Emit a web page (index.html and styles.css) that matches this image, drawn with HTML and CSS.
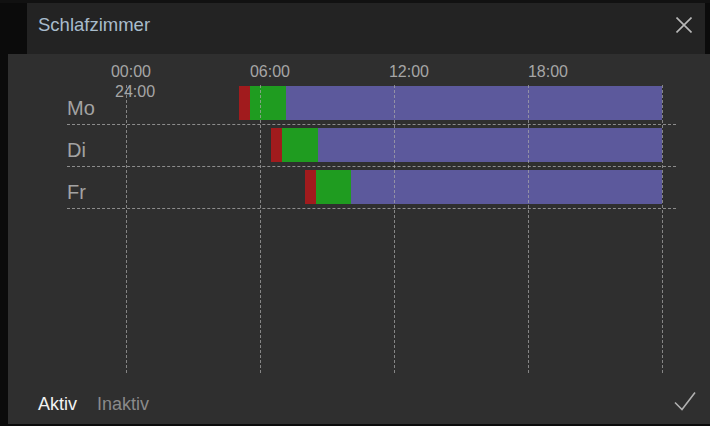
FILE: index.html
```html
<!DOCTYPE html>
<html lang="de">
<head>
<meta charset="utf-8">
<title>Schlafzimmer</title>
<link rel="stylesheet" href="styles.css">
</head>
<body>
<div class="page">
  <div class="topstrip"></div>
  <header class="head">
    <span class="title">Schlafzimmer</span>
    <svg class="close" width="16" height="16" viewBox="0 0 16 16"><path d="M0.5 0.5 L15.5 15.5 M15.5 0.5 L0.5 15.5" stroke="#b8b8b8" stroke-width="1.6" fill="none"/></svg>
  </header>
  <section class="panel">
    <div class="axis">
      <span class="tick">00:00</span>
      <span class="tick">06:00</span>
      <span class="tick">12:00</span>
      <span class="tick">18:00</span>
    </div>
    <div class="plot">
      <div class="row">
        <span class="day">Mo</span>
        <div class="track">
          <span class="gap" style="width:21.08%"></span>
          <span class="seg red" style="width:2.05%"></span>
          <span class="seg green" style="width:6.72%"></span>
          <span class="seg purple" style="width:70.15%"></span>
        </div>
      </div>
      <div class="row">
        <span class="day">Di</span>
        <div class="track">
          <span class="gap" style="width:27.05%"></span>
          <span class="seg red" style="width:2.05%"></span>
          <span class="seg green" style="width:6.72%"></span>
          <span class="seg purple" style="width:64.18%"></span>
        </div>
      </div>
      <div class="row">
        <span class="day">Fr</span>
        <div class="track">
          <span class="gap" style="width:33.40%"></span>
          <span class="seg red" style="width:2.05%"></span>
          <span class="seg green" style="width:6.53%"></span>
          <span class="seg purple" style="width:58.02%"></span>
        </div>
      </div>
      <div class="grid">
        <span class="vline l0"></span>
        <span class="vline l25"></span>
        <span class="vline l50"></span>
        <span class="vline l75"></span>
        <span class="vline l100"></span>
      </div>
      <span class="endlabel">24:00</span>
    </div>
    <footer class="foot">
      <span class="state active">Aktiv</span>
      <span class="state">Inaktiv</span>
      <svg class="ok" width="22" height="22" viewBox="0 0 22 22"><path d="M1 11.5 L8 18.5 L21 1.5" stroke="#b0b0b0" stroke-width="1.6" fill="none"/></svg>
    </footer>
  </section>
</div>
</body>
</html>
```
FILE: styles.css
```css
html, body {
  margin: 0;
  padding: 0;
  background: #0b0b0b;
  overflow: hidden;
}
body {
  font-family: "Liberation Sans", Arial, sans-serif;
  width: 710px;
  height: 426px;
}
.page {
  display: flex;
  flex-direction: column;
  width: 710px;
  height: 426px;
}
.topstrip {
  height: 3px;
  background: #111;
}
.head {
  height: 51px;
  box-sizing: border-box;
  margin-left: 27px;
  margin-right: 5px;
  background: #232323;
  display: flex;
  align-items: center;
  justify-content: space-between;
  padding: 0 13px 8px 11px;
}
.title {
  font-size: 18.5px;
  line-height: 22px;
  color: #a8bccc;
}
.close {
  display: block;
}
.panel {
  margin-left: 8px;
  height: 370px;
  background: #2f2f2f;
  display: flex;
  flex-direction: column;
  box-sizing: border-box;
}
.axis {
  display: flex;
  padding-left: 53.5px;
  margin-top: 9px;
  height: 18px;
}
.tick {
  width: 139px;
  text-align: center;
  font-size: 16px;
  line-height: 18px;
  color: #a6a6a6;
}
.plot {
  position: relative;
  margin-top: 2px;
  margin-left: 59px;
  width: 609px;
  height: 292px;
}
.row {
  display: flex;
  align-items: center;
  padding: 3px 0 4px 0;
  border-bottom: 1px dashed #8c8c8c;
  height: 34px;
}
.day {
  width: 59px;
  font-size: 20px;
  line-height: 22px;
  padding-top: 10px;
  color: #a3a3a3;
}
.track {
  display: flex;
  width: 536px;
  height: 34px;
}
.seg {
  display: block;
  height: 34px;
}
.gap {
  display: block;
}
.red { background: #a11b1d; }
.green { background: #1f9c20; }
.purple { background: #5c599c; }
.grid {
  position: absolute;
  left: 59px;
  top: 2px;
  width: 536px;
  height: 288px;
  pointer-events: none;
}
.vline {
  position: absolute;
  top: 0;
  bottom: 0;
  width: 0;
  border-left: 1px dashed rgba(170, 170, 170, 0.7);
}
.l0 { left: 0; }
.l25 { left: 25%; }
.l50 { left: 50%; }
.l75 { left: 75%; }
.l100 { left: 100%; }
.endlabel {
  position: absolute;
  left: 48px;
  top: 0;
  font-size: 16px;
  line-height: 18px;
  color: #a6a6a6;
}
.foot {
  margin-top: auto;
  display: flex;
  align-items: center;
  height: 26px;
  padding: 0 14px 7px 30px;
}
.state {
  font-size: 18px;
  line-height: 20px;
  color: #8a8a8a;
  margin-right: 20px;
}
.state.active {
  color: #f2f2f2;
}
.ok {
  margin-left: auto;
  margin-top: -4px;
  display: block;
}
```
